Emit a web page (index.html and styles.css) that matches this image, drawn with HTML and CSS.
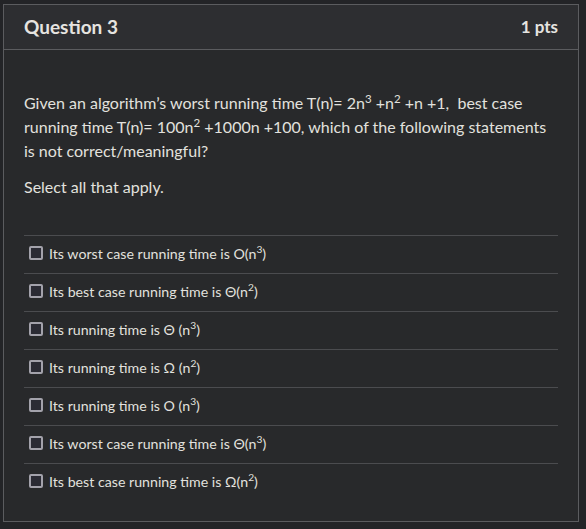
FILE: index.html
```html
<!DOCTYPE html>
<html>
<head>
<meta charset="utf-8">
<link rel="stylesheet" href="styles.css">
</head>
<body>
<div class="question">
  <div class="header">
    <span class="title">Question 3</span>
    <span class="pts">1 pts</span>
  </div>
  <div class="content">
    <p class="text">Given an algorithm’s worst running time T(n)= 2n<sup>3</sup> +n<sup>2</sup> +n +1,&nbsp; best case running time T(n)= 100n<sup>2</sup> +1000n +100, which of the following statements is not correct/meaningful?</p>
    <p class="text">Select all that apply.</p>
    <div class="answers">
      <label class="answer"><span class="box"></span><span>Its worst case running time is O(n<sup>3</sup>)</span></label>
      <label class="answer"><span class="box"></span><span>Its best case running time is Θ(n<sup>2</sup>)</span></label>
      <label class="answer"><span class="box"></span><span>Its running time is Θ (n<sup>3</sup>)</span></label>
      <label class="answer"><span class="box"></span><span>Its running time is Ω (n<sup>2</sup>)</span></label>
      <label class="answer"><span class="box"></span><span>Its running time is O (n<sup>3</sup>)</span></label>
      <label class="answer"><span class="box"></span><span>Its worst case running time is Θ(n<sup>3</sup>)</span></label>
      <label class="answer"><span class="box"></span><span>Its best case running time is Ω(n<sup>2</sup>)</span></label>
    </div>
  </div>
</div>
</body>
</html>
```
FILE: styles.css
```css
html, body {
  margin: 0;
  padding: 0;
  background: #232427;
}
body {
  padding: 4px 7px 0 3px;
  font-family: Lato, "Open Sans", sans-serif;
  color: #e2e1de;
}
.question {
  border: 1px solid #5b5c5f;
  background: #28292b;
  height: 516px;
  box-sizing: content-box;
}
.header {
  display: flex;
  justify-content: space-between;
  align-items: center;
  height: 43px;
  padding: 0 20px 1px 20px;
  background: #2d2e31;
  border-bottom: 1px solid #5b5c5f;
}
.title {
  font-size: 19px;
  font-weight: 700;
  color: #e6e4e0;
}
.pts {
  font-size: 17px;
  font-weight: 700;
  color: #e6e4e0;
}
.content {
  padding: 41px 20px 0 20px;
}
.text {
  margin: 0 0 12px 0;
  font-size: 16px;
  line-height: 24px;
}
.text sup, .answer sup {
  font-size: 0.72em;
  line-height: 1;
  vertical-align: 0.55em;
}
.answers {
  margin-top: 36px;
}
.answer {
  display: flex;
  align-items: center;
  gap: 6px;
  border-top: 1px solid #4b4c4f;
  padding-left: 5px;
  padding-bottom: 4px;
  box-sizing: content-box;
  height: 33px;
  font-size: 14.2px;
}
.box {
  width: 10px;
  height: 10px;
  border: 2px solid #a3a2ab;
  border-radius: 2px;
  background: #2b2b34;
  flex: none;
  margin-top: 1px;
}
```
